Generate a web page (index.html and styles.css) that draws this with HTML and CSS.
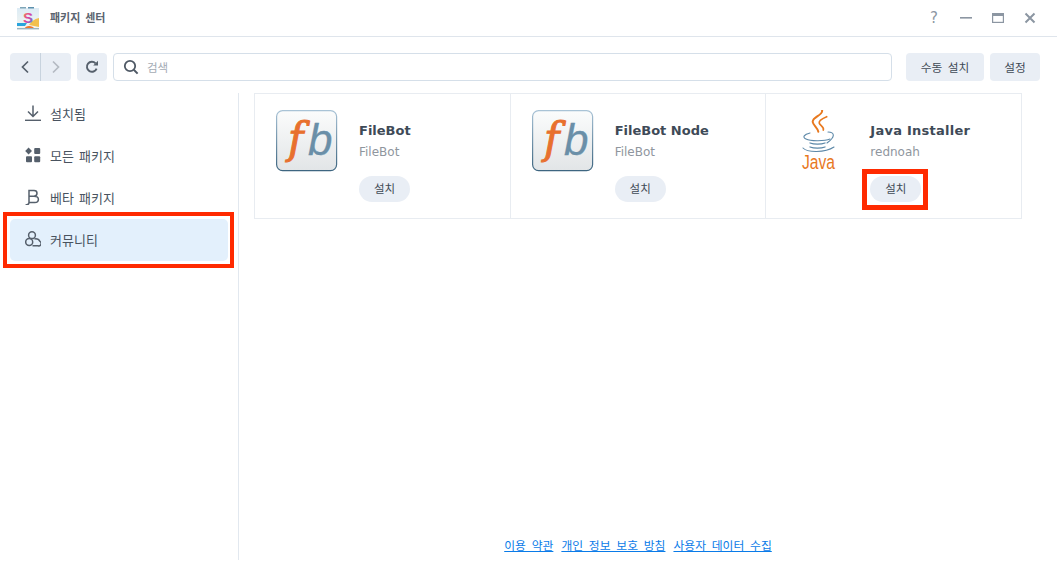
FILE: index.html
```html
<!DOCTYPE html>
<html lang="ko">
<head>
<meta charset="utf-8">
<title>패키지 센터</title>
<link rel="stylesheet" href="styles.css">
</head>
<body>
<div class="app">
  <header class="titlebar">
    <svg class="app-logo" width="24" height="24" viewBox="0 0 24 24">
      <defs>
        <linearGradient id="lg-sky" x1="0" y1="0" x2="0" y2="1"><stop offset="0" stop-color="#dcebf5"/><stop offset="1" stop-color="#f4f6f0"/></linearGradient>
        <linearGradient id="lg-s" x1="0" y1="0" x2="1" y2="1"><stop offset="0" stop-color="#f0a030"/><stop offset=".5" stop-color="#e040a0"/><stop offset="1" stop-color="#3090e8"/></linearGradient>
      </defs>
      <rect x="1" y="2" width="22" height="21" fill="url(#lg-sky)"/>
      <rect x="4" y="1" width="6" height="1.5" fill="#7fa6b8"/>
      <rect x="12" y="1" width="6" height="1.5" fill="#5c90ad"/>
      <path d="M23 12C18 13 15 16 13 19L23 21Z" fill="#f2c04e"/>
      <path d="M1 17H11L9 20H1Z" fill="#2aa4dc"/>
      <path d="M8 23C10 19 16 19 19 23Z" fill="#f0762c"/>
      <rect x="1" y="22" width="22" height="1.4" fill="#9ab4c0"/>
      <text x="7" y="17" class="logo-s" fill="url(#lg-s)">S</text>
    </svg>
    <span class="app-title">패키지 센터</span>
    <div class="win-ctrls">
      <span class="win-help">?</span>
      <svg width="14" height="14" viewBox="0 0 14 14"><rect x="1" y="6" width="12" height="1.6" fill="#8c96a2"/></svg>
      <svg width="14" height="14" viewBox="0 0 14 14"><rect x="1.6" y="2.6" width="10.8" height="8.8" fill="none" stroke="#8c96a2" stroke-width="1.2"/><rect x="1" y="2" width="12" height="3" fill="#8c96a2"/></svg>
      <svg width="14" height="14" viewBox="0 0 14 14"><path d="M2.5 2.5L11.5 11.5M11.5 2.5L2.5 11.5" stroke="#8c96a2" stroke-width="2" fill="none"/></svg>
    </div>
  </header>

  <div class="toolbar">
    <div class="nav-group">
      <button class="nav-btn nav-left"><svg width="10" height="14" viewBox="0 0 10 14"><path d="M8 1.5L2.5 7L8 12.5" fill="none" stroke="#56606c" stroke-width="1.7"/></svg></button>
      <button class="nav-btn"><svg width="10" height="14" viewBox="0 0 10 14"><path d="M2 1.5L7.5 7L2 12.500" fill="none" stroke="#b4bac2" stroke-width="1.7"/></svg></button>
    </div>
    <button class="refresh"><svg width="14" height="14" viewBox="0 0 14 14"><path d="M11.6 8.6A5 5 0 1 1 10.6 3.4" fill="none" stroke="#56606c" stroke-width="1.9"/><path d="M8.2 5.6H13V0.8Z" fill="#56606c"/></svg></button>
    <div class="search">
      <svg width="16" height="16" viewBox="0 0 16 16"><circle cx="7" cy="7" r="5.2" fill="none" stroke="#4f5965" stroke-width="1.8"/><path d="M10.8 10.8L14.6 14.6" stroke="#4f5965" stroke-width="2"/></svg>
      <span class="search-ph">검색</span>
    </div>
    <button class="tool-btn btn-manual">수동 설치</button>
    <button class="tool-btn btn-settings">설정</button>
  </div>

  <div class="main">
    <nav class="sidebar">
      <a class="side-item">
        <svg width="16" height="16" viewBox="0 0 16 16"><path d="M8 0.5V11M3 6.500L8 11.500L13 6.500" fill="none" stroke="#56606c" stroke-width="1.5"/><rect x="0" y="14.600" width="16" height="1.400" fill="#56606c"/></svg>
        <span>설치됨</span>
      </a>
      <a class="side-item">
        <svg width="16" height="16" viewBox="0 0 16 16" fill="#56606c"><path d="M3.600 0.600L7 4 3.600 7.400 0.200 4Z"/><rect x="9.200" y="1" width="6" height="6" rx="1"/><rect x="1" y="9.200" width="6" height="6" rx="1"/><rect x="9.200" y="9.200" width="6" height="6" rx="1"/></svg>
        <span>모든 패키지</span>
      </a>
      <a class="side-item">
        <svg width="16" height="16" viewBox="0 0 16 16"><path d="M0.500 16C3 16 4 15 4 13.500V1.500H9C11 1.500 12 2.700 12 4.200C12 5.800 11 7 9 7.200H4M9 7.200C11.800 7.200 13.400 8.500 13.400 10.300C13.400 12.200 12 13.600 9.800 13.600H4" fill="none" stroke="#56606c" stroke-width="1.500"/></svg>
        <span>베타 패키지</span>
      </a>
      <a class="side-item is-active">
        <svg width="16" height="16" viewBox="0 0 16 16" fill="none" stroke="#56606c" stroke-width="1.500"><circle cx="7" cy="4.200" r="3.400"/><circle cx="4.200" cy="11" r="3.500"/><path d="M7.500 14.800H13A2.400 2.400 0 0 0 15 10.500C14 8.500 11.500 7.600 9.500 8"/></svg>
        <span>커뮤니티</span>
      </a>
    </nav>

    <section class="content">
      <div class="cards">
        <article class="card">
          <svg class="pkg-icon" width="62" height="62" viewBox="0 0 62 62">
            <defs>
              <linearGradient id="fb-bg" x1="0" y1="0" x2="0" y2="1"><stop offset="0" stop-color="#fbfcfc"/><stop offset="1" stop-color="#e2e5e7"/></linearGradient>
              <linearGradient id="fb-bd" x1="0" y1="0" x2="0" y2="1"><stop offset="0" stop-color="#a9c3d6"/><stop offset="1" stop-color="#3d6580"/></linearGradient>
              <g id="fb-tile">
                <rect x="0.600" y="0.600" width="60" height="60" rx="6" fill="url(#fb-bg)" stroke="url(#fb-bd)" stroke-width="1.200"/>
                <text x="12" y="43" class="fb-f">f</text>
                <text x="32" y="45" class="fb-b">b</text>
              </g>
            </defs>
            <use href="#fb-tile"/>
          </svg>
          <div class="card-info">
            <h3 class="pkg-name">FileBot</h3>
            <p class="pkg-author">FileBot</p>
            <button class="install">설치</button>
          </div>
        </article>
        <article class="card">
          <svg class="pkg-icon" width="62" height="62" viewBox="0 0 62 62">
            <use href="#fb-tile"/>
          </svg>
          <div class="card-info">
            <h3 class="pkg-name">FileBot Node</h3>
            <p class="pkg-author">FileBot</p>
            <button class="install">설치</button>
          </div>
        </article>
        <article class="card">
          <svg class="pkg-icon" width="62" height="62" viewBox="0 0 62 62">
            <g fill="none" stroke="#e8791f" stroke-linecap="round">
              <path d="M35 0C37 5 25 7 25.700 12C26 15 31 18 31.300 21.700" stroke-width="2"/>
              <path d="M39.700 6.700C34 9 31.500 11 32.300 13.300C33 15.500 37.500 17 36.300 20" stroke-width="1.700"/>
            </g>
            <g fill="none" stroke="#5c88a8" stroke-linecap="round">
              <path d="M23 23C17 24.500 15 27 19 29C24 31.500 38 31 43 29" stroke-width="1.100"/>
              <path d="M41 22C48 22 48.500 27 40 33" stroke-width="1.100"/>
              <path d="M23 33C27 34.500 34 34.500 38 33" stroke-width="1.300"/>
              <path d="M23 37C27 38.500 34 38.500 38 37" stroke-width="1.300"/>
              <path d="M16 38C20 42.500 38 43 47 37" stroke-width="1.100"/>
            </g>
            <text x="15" y="59" textLength="33" lengthAdjust="spacingAndGlyphs" class="java-word">Java</text>
          </svg>
          <div class="card-info">
            <h3 class="pkg-name pkg-name-wide">Java Installer</h3>
            <p class="pkg-author">rednoah</p>
            <button class="install">설치</button>
          </div>
        </article>
      </div>
      <footer class="legal">
        <a>이용 약관</a>
        <a>개인 정보 보호 방침</a>
        <a>사용자 데이터 수집</a>
      </footer>
    </section>
  </div>
  <div class="mark mark-side"></div>
  <div class="mark mark-install"></div>
</div>
</body>
</html>
```
FILE: styles.css
```css
* { box-sizing: border-box; }
html, body { margin: 0; padding: 0; background: #fff; }
body {
  font-family: "DejaVu Sans", "Noto Sans CJK KR", sans-serif;
  color: #3f4a56;
  overflow: hidden;
}
button { font-family: inherit; border: 0; padding: 0; cursor: pointer; }
.app { position: relative; width: 1057px; height: 576px; display: flex; flex-direction: column; }

.titlebar {
  height: 37px;
  flex: none;
  border-bottom: 1px solid #dfe5ec;
  display: flex;
  align-items: center;
  padding: 0 20px 1px 16px;
}
.app-logo { display: block; margin-right: 10px; }
.logo-s { font: 700 15px "Liberation Sans", sans-serif; }
.app-title { font-size: 11px; font-weight: 700; color: #5a6470; word-spacing: 1px; margin-top: -2px; }
.win-ctrls { margin-left: auto; display: flex; align-items: center; gap: 18px; }
.win-help { width: 14px; text-align: center; font: 400 15px "DejaVu Sans", sans-serif; color: #8c96a2; }

.toolbar {
  margin-top: 16px;
  padding: 0 17px 0 10px;
  height: 28px;
  flex: none;
  display: flex;
  align-items: stretch;
}
.nav-group { display: flex; width: 61px; border-radius: 4px; overflow: hidden; background: #e9eef5; }
.nav-btn { flex: 1; background: transparent; display: flex; align-items: center; justify-content: center; }
.nav-left { border-right: 1px solid #c8d3de; }
.refresh { width: 30px; margin-left: 6px; background: #e9eef5; border-radius: 4px; display: flex; align-items: center; justify-content: center; }
.search {
  width: 779px;
  margin-left: 6px;
  border: 1px solid #d5dfe9;
  border-radius: 4px;
  display: flex;
  align-items: center;
  gap: 8px;
  padding: 0 9px;
}
.search-ph { font-size: 11.500px; color: #a4abb4; }
.tool-btn { background: #e9eef5; border-radius: 4px; font-size: 11.700px; word-spacing: 2px; color: #3f4a56; padding-bottom: 2px; }
.btn-manual { width: 78px; margin-left: 14px; }
.btn-settings { width: 50px; margin-left: 6px; }

.main { flex: 1; display: flex; min-height: 0; padding: 12px 0 16px; }
.sidebar {
  width: 239px;
  flex: none;
  border-right: 1px solid #e2e8ef;
  padding: 0 10px;
  display: flex;
  flex-direction: column;
  gap: 2px;
}
.side-item {
  height: 40px;
  display: flex;
  align-items: center;
  gap: 9px;
  padding-left: 15px;
  border-radius: 5px;
  font-size: 13px;
  word-spacing: 1px;
  color: #49535f;
}
.side-item svg { flex: none; }
.is-active { background: #e3f0fc; height: 42px; padding-bottom: 2px; }

.content { flex: 1; display: flex; flex-direction: column; padding-left: 15px; }
.cards {
  width: 768px;
  height: 126px;
  display: flex;
  border: 1px solid #e8ecf1;
}
.card {
  flex: 1;
  display: flex;
  padding: 16px 0 0 21px;
  border-right: 1px solid #e8ecf1;
}
.card:last-child { border-right: 0; }
.pkg-icon { flex: none; display: block; }
.card-info { margin-left: 21px; display: flex; flex-direction: column; align-items: flex-start; }
.pkg-name { margin: 11px 0 0; font-size: 13px; line-height: 20px; font-weight: 700; color: #3e4a57; }
.pkg-name-wide { letter-spacing: 0.250px; }
.pkg-author { margin: 2px 0 0; font-size: 12px; line-height: 18px; color: #8f969e; }
.install {
  margin-top: 15px;
  width: 51px;
  height: 26px;
  border-radius: 13px;
  background: #e9eef5;
  font-size: 11.500px;
  color: #3f4a56;
  padding-bottom: 2px;
}
.fb-f { font: italic 400 42px "DejaVu Serif", serif; fill: #e8702e; stroke: #e8702e; stroke-width: 1px; }
.fb-b { font: italic 400 44px "Liberation Sans", sans-serif; fill: #6a8fa8; stroke: #6a8fa8; stroke-width: 0.300px; }
.java-word { font: 400 20px "Liberation Sans", sans-serif; fill: #e8791f; }

.legal {
  margin-top: auto;
  width: 768px;
  display: flex;
  justify-content: center;
  gap: 8px;
  font-size: 11.800px;
  word-spacing: 2px;
  line-height: 16px;
  padding: 0 0 6px;
}
.legal a { color: #0a7be8; text-decoration: underline; }

.mark { position: absolute; border: 5px solid #ff2a00; pointer-events: none; }
.mark-side { left: 3px; top: 212px; width: 231px; height: 56px; border-width: 4px; }
.mark-install { left: 862px; top: 169px; width: 66px; height: 41px; }
```
